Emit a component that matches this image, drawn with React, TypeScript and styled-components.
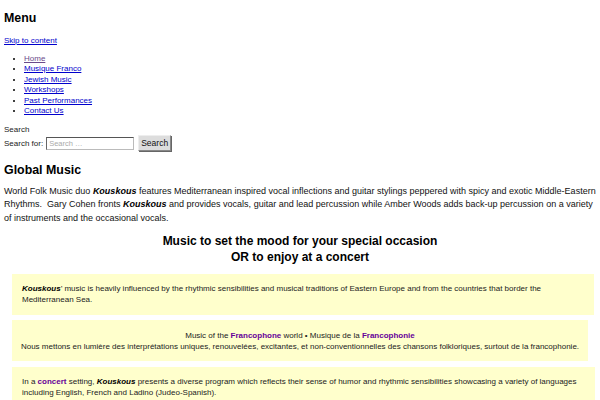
import styled, { createGlobalStyle } from "styled-components";

const GlobalStyle = createGlobalStyle`
  body {
    margin: 0;
    padding: 0 4px;
    background: #fff;
    color: #111;
    font-family: "Liberation Sans", Arial, sans-serif;
  }
`;

const Page = styled.div`
  display: flex;
  flex-direction: column;
`;

const Heading = styled.h2<{ $top: number; $bottom: number }>`
  font-size: 12.4px;
  font-weight: bold;
  line-height: 18px;
  margin: ${(p) => p.$top}px 0 ${(p) => p.$bottom}px;
  color: #000;
`;

const SkipLink = styled.a`
  display: block;
  align-self: flex-start;
  font-size: 8px;
  color: #0000cc;
  text-decoration: underline;
  line-height: 12px;
`;

const NavList = styled.ul`
  margin: 6.5px 0 7px;
  padding-left: 20px;
  font-size: 8px;
  line-height: 10.6px;
  li::marker {
    color: #000;
  }
`;

const NavLink = styled.a<{ $visited?: boolean }>`
  color: ${(p) => (p.$visited ? "#6a4a8a" : "#0000cc")};
  text-decoration: underline;
`;

const SearchBlock = styled.form`
  display: flex;
  flex-direction: column;
  font-size: 8px;
  line-height: 11px;
  color: #222;
  gap: 0;
`;

const SearchRow = styled.div`
  display: flex;
  align-items: center;
  gap: 3px;
`;

const SearchInput = styled.input`
  width: 88px;
  height: 13px;
  box-sizing: border-box;
  padding: 0 2px;
  font-size: 7.5px;
  font-family: inherit;
  border: 1px solid #bbb;
  border-top-color: #555;
  border-left-color: #666;
  &::placeholder {
    color: #aaa;
  }
`;

const SearchButton = styled.button`
  font-family: inherit;
  font-size: 8.5px;
  height: 16px;
  width: 33px;
  margin-left: 1px;
  padding: 0;
  background: #ddd;
  color: #111;
  border: 1px solid #888;
  border-top-color: #eee;
  border-left-color: #eee;
  box-shadow: 1px 1px 0 #666;
`;

const Intro = styled.p`
  margin: 0;
  font-size: 9px;
  line-height: 13.5px;
  color: #111;
`;

const Band = styled.strong`
  font-style: italic;
  font-weight: bold;
  color: #000;
`;

const Tagline = styled.h3`
  margin: 7.5px 0 9px;
  text-align: center;
  font-size: 12px;
  line-height: 16px;
  font-weight: bold;
  color: #000;
`;

const Boxes = styled.div`
  display: flex;
  flex-direction: column;
  gap: 5.5px;
  padding-left: 8px;
`;

const Box = styled.div<{ $width: number; $center?: boolean }>`
  width: ${(p) => p.$width}px;
  box-sizing: border-box;
  background: #ffffcc;
  padding: 9.5px ${(p) => (p.$center ? 4 : 10)}px;
  font-size: 8px;
  line-height: 11px;
  color: #222;
  text-align: ${(p) => (p.$center ? "center" : "left")};
`;

const Highlight = styled.a`
  color: #660099;
  font-weight: bold;
  text-decoration: none;
`;

export default function App() {
  const nav = [
    "Home",
    "Musique Franco",
    "Jewish Music",
    "Workshops",
    "Past Performances",
    "Contact Us",
  ];
  return (
    <>
      <GlobalStyle />
      <Page>
        <Heading $top={9} $bottom={8}>
          Menu
        </Heading>
        <SkipLink href="#content">Skip to content</SkipLink>
        <NavList>
          {nav.map((item, i) => (
            <li key={item}>
              <NavLink href="#" $visited={i === 0}>
                {item}
              </NavLink>
            </li>
          ))}
        </NavList>
        <SearchBlock onSubmit={(e) => e.preventDefault()}>
          <span>Search</span>
          <SearchRow>
            <label htmlFor="s">Search for:</label>
            <SearchInput id="s" placeholder="Search …" />
            <SearchButton type="submit">Search</SearchButton>
          </SearchRow>
        </SearchBlock>
        <Heading $top={10} $bottom={5.5} id="content">
          Global Music
        </Heading>
        <Intro>
          World Folk Music duo <Band>Kouskous</Band> features Mediterranean
          inspired vocal inflections and guitar stylings peppered with spicy and
          exotic Middle-Eastern Rhythms.&nbsp; Gary Cohen fronts{" "}
          <Band>Kouskous</Band> and provides vocals, guitar and lead percussion
          while Amber Woods adds back-up percussion on a variety of instruments
          and the occasional vocals.
        </Intro>
        <Tagline>
          Music to set the mood for your special occasion
          <br />
          OR to enjoy at a concert
        </Tagline>
        <Boxes>
          <Box $width={582}>
            <Band>Kouskous</Band>’ music is heavily influenced by the rhythmic
            sensibilities and musical traditions of Eastern Europe and from the
            countries that border the Mediterranean Sea.
          </Box>
          <Box $width={576} $center>
            Music of the <Highlight href="#">Francophone</Highlight> world •
            Musique de la <Highlight href="#">Francophonie</Highlight>
            <br />
            Nous mettons en lumière des interprétations uniques, renouvelées,
            excitantes, et non-conventionnelles des chansons folkloriques,
            surtout de la francophonie.
          </Box>
          <Box $width={583}>
            In a <Highlight href="#">concert</Highlight> setting,{" "}
            <Band>Kouskous</Band> presents a diverse program which reflects
            their sense of humor and rhythmic sensibilities showcasing a variety
            of languages including English, French and Ladino (Judeo-Spanish).
          </Box>
        </Boxes>
      </Page>
    </>
  );
}
